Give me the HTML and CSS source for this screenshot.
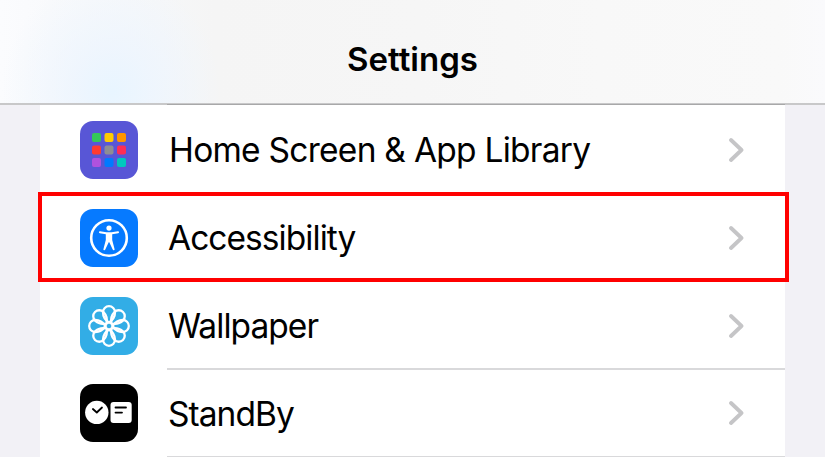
FILE: index.html
```html
<!DOCTYPE html>
<html lang="en">
<head>
  <meta charset="utf-8">
  <meta name="viewport" content="width=device-width, initial-scale=1">
  <title>Settings</title>
  <link rel="stylesheet" href="styles.css">
</head>
<body>
  <div class="screen">
    <header class="navbar">
      <h1>Settings</h1>
    </header>
    <ul class="list">
      <li class="row">
        <svg class="icon" viewBox="0 0 58 58">
          <rect width="58" height="58" rx="13" fill="#5856d6"/>
          <rect x="12" y="12" width="9" height="9" rx="2" fill="#34c759"/>
          <rect x="24.5" y="12" width="9" height="9" rx="2" fill="#ffcc00"/>
          <rect x="37" y="12" width="9" height="9" rx="2" fill="#ff9500"/>
          <rect x="12" y="24.5" width="9" height="9" rx="2" fill="#ff3b30"/>
          <rect x="24.5" y="24.5" width="9" height="9" rx="2" fill="#8e8e93"/>
          <rect x="37" y="24.5" width="9" height="9" rx="2" fill="#ff2d55"/>
          <rect x="12" y="37" width="9" height="9" rx="2" fill="#af52de"/>
          <rect x="24.5" y="37" width="9" height="9" rx="2" fill="#007aff"/>
          <rect x="37" y="37" width="9" height="9" rx="2" fill="#00c7be"/>
        </svg>
        <div class="label home">Home Screen &amp; App Library</div>
        <svg class="chevron" viewBox="0 0 16 26"><path d="M3 3 13.5 13 3 23"/></svg>
      </li>
      <li class="row selected">
        <svg class="icon" viewBox="0 0 58 58">
          <rect width="58" height="58" rx="13" fill="#067aff"/>
          <circle cx="29" cy="29" r="17.8" fill="none" stroke="#fff" stroke-width="2.6"/>
          <circle cx="29" cy="19.1" r="2.6" fill="#fff"/>
          <path fill="#fff" d="M20 22.2 26.5 23.2h5L38 22.2c1.4 0 1.4 1.7.2 2L32.2 25.3V31l2.4 9.200c.1 1.300-1.500 1.600-1.900.4L29.300 33.200h-.6l-3.400 7.400c-.4 1.200-2 .9-1.900-.4l2.400-9.200v-5.700L19.800 24.200c-1.200-.3-1.200-2 .2-2z"/>
        </svg>
        <div class="label">Accessibility</div>
        <svg class="chevron" viewBox="0 0 16 26"><path d="M3 3 13.5 13 3 23"/></svg>
      </li>
      <li class="row">
        <svg class="icon" viewBox="0 0 58 58">
          <defs>
            <path id="petal" d="M29 25.500C26 23.500 23 19.500 23 15.200a6 6 0 0 1 12 0C35 19.500 32 23.500 29 25.500z"/>
          </defs>
          <rect width="58" height="58" rx="13" fill="#32ade6"/>
          <g fill="none" stroke="#fff" stroke-width="2.3">
            <use href="#petal"/>
            <use href="#petal" transform="rotate(45 29 29)"/>
            <use href="#petal" transform="rotate(90 29 29)"/>
            <use href="#petal" transform="rotate(135 29 29)"/>
            <use href="#petal" transform="rotate(180 29 29)"/>
            <use href="#petal" transform="rotate(225 29 29)"/>
            <use href="#petal" transform="rotate(270 29 29)"/>
            <use href="#petal" transform="rotate(315 29 29)"/>
            <circle cx="29" cy="29" r="3.4" stroke-width="1.8"/>
          </g>
        </svg>
        <div class="label">Wallpaper</div>
        <svg class="chevron" viewBox="0 0 16 26"><path d="M3 3 13.5 13 3 23"/></svg>
      </li>
      <li class="row">
        <svg class="icon" viewBox="0 0 58 58">
          <rect width="58" height="58" rx="13" fill="#000"/>
          <circle cx="16.8" cy="28.4" r="11.700" fill="#fff"/>
          <path d="M12.9 25 16.8 28.5 22 23.500" fill="none" stroke="#000" stroke-width="1.8" stroke-linecap="round" stroke-linejoin="round"/>
          <rect x="30.5" y="18" width="21.2" height="21" rx="3" fill="#fff"/>
          <path d="M35.5 23.5h10.500M35.500 28.600h6.500" fill="none" stroke="#000" stroke-width="1.8" stroke-linecap="round"/>
        </svg>
        <div class="label">StandBy</div>
        <svg class="chevron" viewBox="0 0 16 26"><path d="M3 3 13.5 13 3 23"/></svg>
      </li>
    </ul>
  </div>
</body>
</html>
```
FILE: styles.css
```css
*{
  margin: 0;
  padding: 0;
  box-sizing: border-box;
}
body{
  background: #f2f1f6;
  font-family: Inter, "Liberation Sans", sans-serif;
  color: #000;
}
.screen{
  width: 825px;
  height: 457px;
  overflow: hidden;
}
.navbar{
  display: flex;
  justify-content: center;
  height: 105px;
  padding-top: 39px;
  border-bottom: 2px solid #c8c8c9;
  background:
    radial-gradient(ellipse 110px 120px at 112px 92px, #e8f5ff 0%, rgba(237,245,254,.85) 35%, rgba(245,248,251,0) 100%),
    linear-gradient(90deg, #fbfcfe 0, #f9fafc 50px, #f6f7f8 160px, #f5f5f5 215px, #f6f6f6 420px, #f8f8f8 600px, #f9f9f9 780px, #fafafc 100%);
}
.navbar h1{
  font-size: 33px;
  line-height: 40px;
  font-weight: 600;
}
.list{
  list-style: none;
  width: 745px;
  margin-left: 40px;
  padding-top: 1.3px;
  background: #fff;
  position: relative;
}
/* separator of the row scrolled under the bar */
.list::before{
  content: '';
  position: absolute;
  left: 127px;
  right: 0;
  top: -1px;
  height: 1px;
  background: #a8a8a9;
}
.row{
  display: flex;
  align-items: center;
  height: 87.7px;
  padding-left: 40px;
  position: relative;
}
/* separator starts at the label, not at the icon */
.row::after{
  content: '';
  position: absolute;
  left: 127px;
  right: 0;
  bottom: -1px;
  height: 2px;
  background: #d9d9db;
}
/* red frame drawn over the row edges */
.selected::before{
  content: '';
  position: absolute;
  z-index: 1;
  left: -2px;
  right: -4px;
  top: -2px;
  bottom: 0;
  border: 4px solid #ff0000;
}
.selected::after{
  display: none;
}
.icon{
  flex: none;
  width: 58px;
  height: 58px;
}
.label{
  flex: 1;
  margin-left: 30px;
  padding-top: 1px;
  font-size: 33.5px;
  line-height: 44px;
  white-space: nowrap;
  letter-spacing: -0.95px;
}
.home{
  padding-top: 0;
  text-indent: 1px;
  letter-spacing: -0.74px;
}
.chevron{
  flex: none;
  width: 16px;
  height: 26px;
  margin-right: 41px;
}
.chevron path{
  fill: none;
  stroke: #c5c5c7;
  stroke-width: 3.8;
  stroke-linecap: round;
  stroke-linejoin: round;
}
```
